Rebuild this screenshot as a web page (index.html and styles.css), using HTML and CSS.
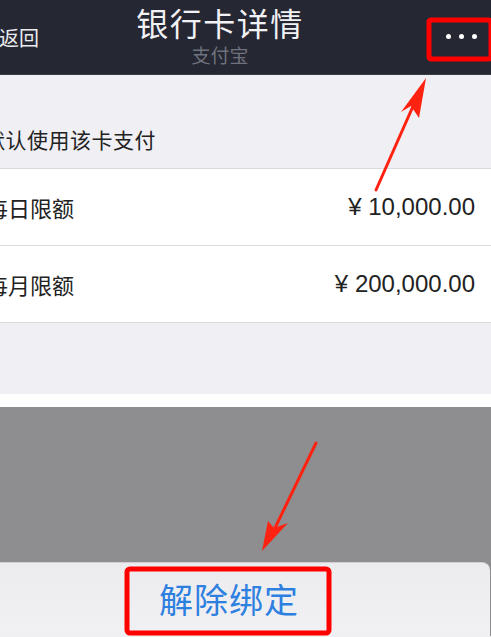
FILE: index.html
```html
<!DOCTYPE html>
<html lang="zh-CN">
<head>
    <meta charset="UTF-8">
    <meta name="viewport" content="width=device-width, initial-scale=1.0">
    <title>银行卡详情</title>
    <link rel="stylesheet" href="styles.css">
</head>
<body>

<div class="screen">
    <div class="navbar">
        <div class="nav-back">返回</div>
        <div class="nav-title">
            <div class="title">银行卡详情</div>
            <div class="subtitle">支付宝</div>
        </div>
        <div class="nav-more">
            <span class="dot"></span><span class="dot"></span><span class="dot"></span>
        </div>
    </div>

    <div class="section-header">
        <span class="header-text">默认使用该卡支付</span>
    </div>

    <div class="list">
        <div class="row">
            <span class="label">每日限额</span>
            <span class="amount">¥ 10,000.00</span>
        </div>
        <div class="row">
            <span class="label">每月限额</span>
            <span class="amount">¥ 200,000.00</span>
        </div>
    </div>

    <div class="spacer"></div>
    <div class="white-band"></div>

    <div class="mask"></div>

    <div class="sheet">
        <div class="sheet-btn">解除绑定</div>
    </div>

    <!-- annotations -->
    <svg class="marks" width="491" height="637" viewBox="0 0 491 637">
        <rect x="429" y="20" width="62" height="39" rx="2" fill="none" stroke="#f00" stroke-width="5"/>
        <rect x="127" y="569" width="202" height="64" rx="3" fill="none" stroke="#f00" stroke-width="5"/>
        <line x1="376" y1="190" x2="414" y2="104" stroke="#f21" stroke-width="3" stroke-linecap="round"/>
        <polygon points="426,78 401,112 411,106 419,118" fill="#f21"/>
        <line x1="316" y1="443" x2="274" y2="530" stroke="#f21" stroke-width="3" stroke-linecap="round"/>
        <polygon points="262,551 268,521 274,528 288,523" fill="#f21"/>
    </svg>
</div>

</body>
</html>
```

FILE: styles.css
```css
body {
    margin: 0;
    font-family: "Liberation Sans", "Noto Sans CJK SC", sans-serif;
    background-color: #efeff4;
    overflow: hidden;
}

.screen {
    position: relative;
    width: 491px;
    height: 637px;
    overflow: hidden;
}

.navbar {
    display: grid;
    grid-template-columns: 40px 1fr 64px;
    align-items: center;
    height: 74px;
    background-color: #252733;
    border-bottom: 1px solid #3a3c48;
}

.nav-back {
    color: #ececef;
    font-size: 20px;
    margin-left: -1px;
    white-space: nowrap;
}

.nav-title {
    text-align: center;
    padding-right: 27px;
    padding-top: 2px;
}

.title {
    color: #f2f2f4;
    font-size: 32px;
    line-height: 38px;
    letter-spacing: 1.5px;
}

.subtitle {
    color: #6f717d;
    font-size: 19px;
    line-height: 26px;
}

.nav-more {
    display: flex;
    justify-content: center;
    gap: 8px;
    padding-left: 4px;
    margin-top: -2px;
}

.dot {
    width: 5px;
    height: 5px;
    border-radius: 50%;
    background-color: #fff;
}

.section-header {
    height: 94px;
    display: flex;
    align-items: flex-end;
    padding-bottom: 14px;
    box-sizing: border-box;
    border-bottom: 1px solid #d9d9de;
}

.header-text {
    margin-left: -16px;
    font-size: 21px;
    color: #222;
    letter-spacing: 0.5px;
    white-space: nowrap;
}

.list {
    background-color: #fff;
}

.row {
    display: flex;
    justify-content: space-between;
    align-items: center;
    height: 76px;
    padding-right: 16px;
    border-bottom: 1px solid #dcdce0;
}

.label {
    margin-left: -14px;
    font-size: 22px;
    color: #222;
    white-space: nowrap;
}

.amount {
    font-size: 24px;
    color: #222;
}

.spacer {
    height: 71px;
}

.white-band {
    height: 13px;
    background-color: #fff;
}

.mask {
    height: 155px;
    background-color: #8e8e90;
}

.sheet {
    height: 74px;
    background-color: #8e8e90;
}

.sheet-btn {
    height: 100%;
    margin-right: 1px;
    background: linear-gradient(#ececef, #f1f1f4);
    border-top-right-radius: 8px;
    border-top: 1px solid #d0d0d4;
    box-sizing: border-box;
    display: flex;
    justify-content: center;
    align-items: center;
    padding-right: 32px;
    padding-bottom: 2px;
    color: #2d7fe0;
    font-size: 34px;
    letter-spacing: 1px;
}

.marks {
    position: absolute;
    top: 0;
    left: 0;
}
```
